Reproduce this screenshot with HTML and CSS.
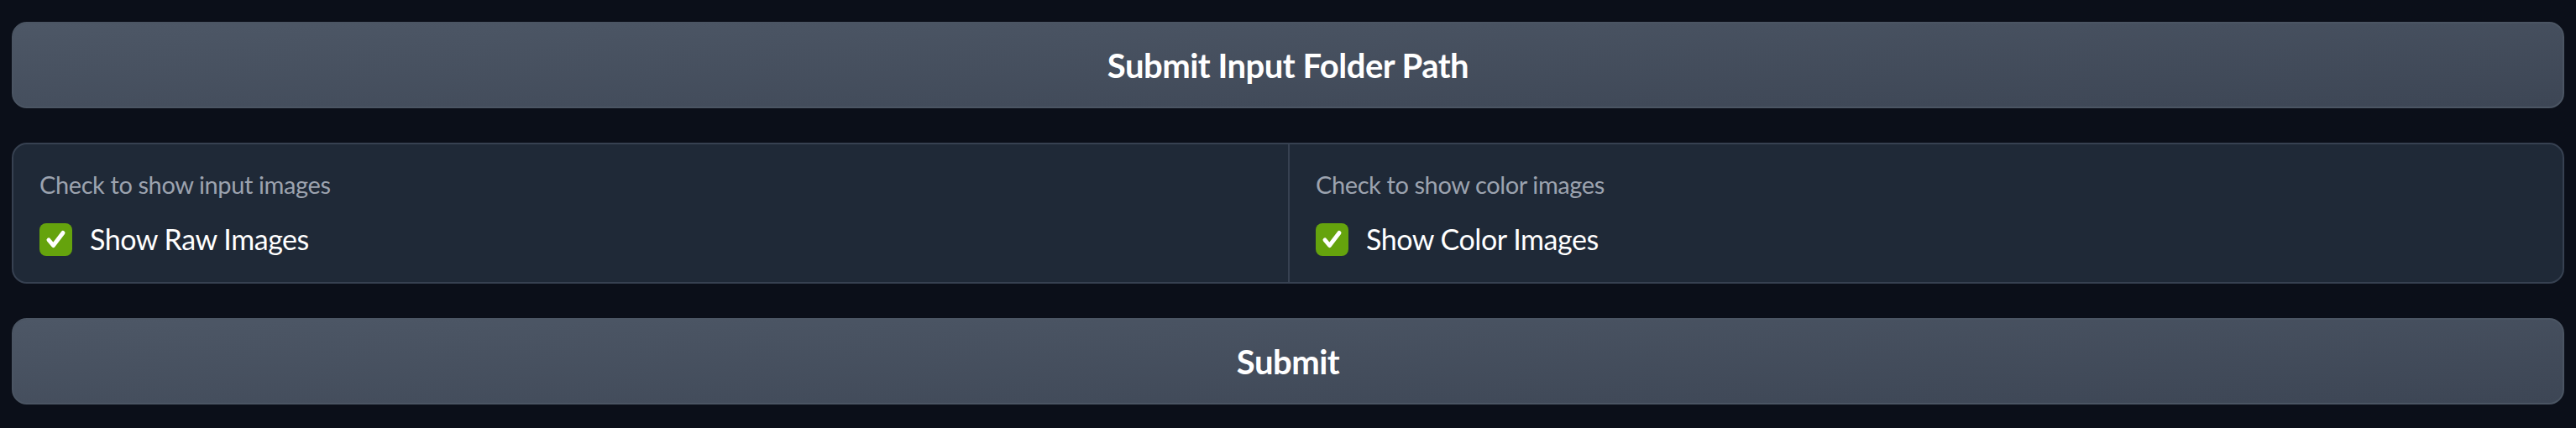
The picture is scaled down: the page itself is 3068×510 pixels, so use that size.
FILE: index.html
```html
<!DOCTYPE html>
<html>
<head>
<meta charset="utf-8">
<link rel="stylesheet" href="styles.css">
</head>
<body>
<div class="app">
  <button class="btn">Submit Input Folder Path</button>
  <div class="panel">
    <div class="col">
      <div class="label">Check to show input images</div>
      <label class="check">
        <span class="box"><svg viewBox="0 0 39 39" width="39" height="39"><path d="M11 20 L16.5 26.5 L28 11.5" fill="none" stroke="#fff" stroke-width="5" stroke-linecap="round" stroke-linejoin="round"/></svg></span>
        <span class="check-text">Show Raw Images</span>
      </label>
    </div>
    <div class="col">
      <div class="label">Check to show color images</div>
      <label class="check">
        <span class="box"><svg viewBox="0 0 39 39" width="39" height="39"><path d="M11 20 L16.5 26.5 L28 11.5" fill="none" stroke="#fff" stroke-width="5" stroke-linecap="round" stroke-linejoin="round"/></svg></span>
        <span class="check-text">Show Color Images</span>
      </label>
    </div>
  </div>
  <button class="btn">Submit</button>
</div>
</body>
</html>
```
FILE: styles.css
```css
html, body {
  margin: 0;
  padding: 0;
  background: #0b0f19;
  height: 100%;
}
body {
  font-family: Lato, "Liberation Sans", sans-serif;
}
.app {
  display: flex;
  flex-direction: column;
  gap: 41px;
  padding: 26px 14px 0 14px;
}
.btn {
  height: 103px;
  border: 2px solid #4b5563;
  border-radius: 18px;
  background: linear-gradient(to bottom right, #4d5766, #3d4655);
  color: #fff;
  font-family: Lato, "Liberation Sans", sans-serif;
  font-weight: 700;
  font-size: 40px;
  letter-spacing: -0.5px;
  padding: 0;
}
.panel {
  height: 168px;
  box-sizing: border-box;
  border: 2px solid #374151;
  border-radius: 18px;
  background: #1f2937;
  display: grid;
  grid-template-columns: 1fr 1fr;
  overflow: hidden;
}
.col {
  padding: 28px 31px 0 31px;
  display: flex;
  flex-direction: column;
}
.col + .col {
  border-left: 2px solid #374151;
}
.label {
  color: #9ca3af;
  font-size: 29px;
  letter-spacing: -0.4px;
  line-height: 40px;
}
.check {
  display: flex;
  align-items: center;
  gap: 21px;
  margin-top: 25px;
}
.box {
  width: 39px;
  height: 39px;
  border-radius: 8px;
  background: #65a30d;
  display: block;
  flex: none;
}
.box svg { display: block; }
.check-text {
  color: #fff;
  font-size: 34px;
  letter-spacing: -0.45px;
  line-height: 40px;
}
```
